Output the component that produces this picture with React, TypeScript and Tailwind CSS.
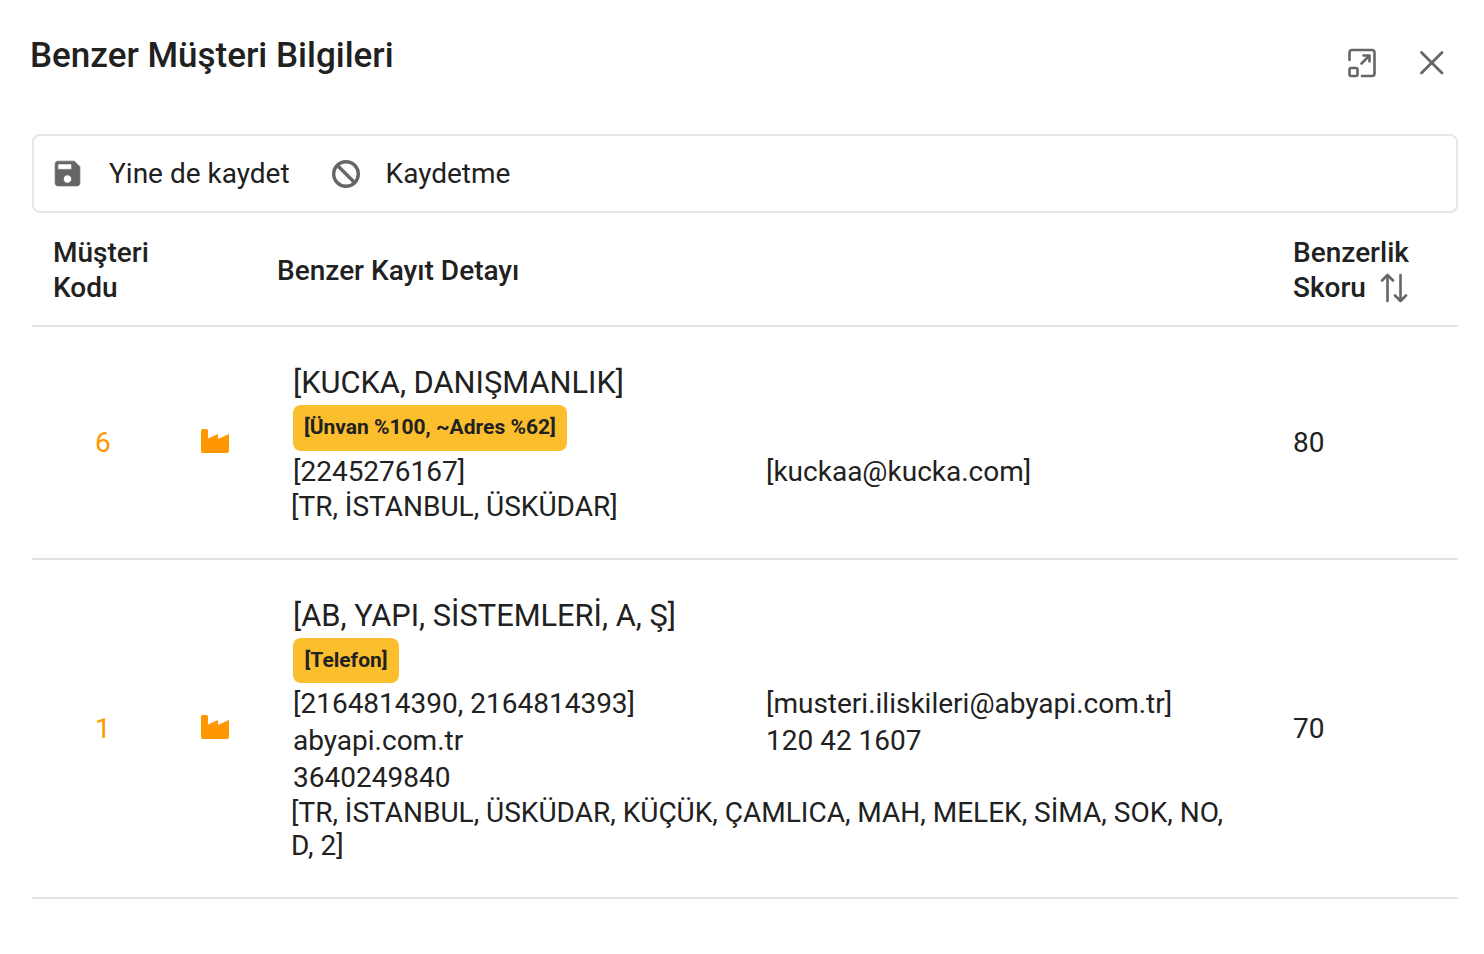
import React from "react";

const Factory = () => (
  <svg width="28" height="24" viewBox="0 0 28 24" className="mb-[4px] block text-[#ff9800]" fill="currentColor">
    <path d="M1.5 0h4A1.5 1.5 0 0 1 7 1.5V9.5L17 5v5l11-5v17a2 2 0 0 1-2 2H2a2 2 0 0 1-2-2V1.5A1.5 1.5 0 0 1 1.5 0z" />
  </svg>
);

const Row = ({ code, children, score, className }: { code: string; children: React.ReactNode; score: string; className: string }) => (
  <div className={`grid grid-cols-[245px_1016px_1fr] items-center border-b-2 border-[#e3e3e3] ${className}`}>
    <div className="flex items-center pl-[63px]">
      <span className="w-[106px] text-[28px] text-[#ff9800]">{code}</span>
      <Factory />
    </div>
    <div>{children}</div>
    <div className="text-[28px] text-[#212121]">{score}</div>
  </div>
);

export default function App() {
  return (
    <div className="h-[954px] w-[1484px] bg-white pl-[32px] pr-[26px] font-['Roboto',sans-serif] text-[#212121]">
      <div className="flex h-[134px] items-start justify-between">
        <h1 className="ml-[-2px] mt-[35px] text-[35px] font-medium leading-[42px]">Benzer Müşteri Bilgileri</h1>
        <div className="mr-[11px] mt-[48px] flex items-center gap-[40px] text-[#666666]">
          <svg width="30" height="30" viewBox="0 0 30 30" fill="none" stroke="currentColor" strokeWidth="2.6" strokeLinecap="round" strokeLinejoin="round">
            <path d="M2.5 12V4.5a2.5 2.5 0 0 1 2.5-2.5h20a2.5 2.5 0 0 1 2.5 2.5v21a2.5 2.5 0 0 1-2.5 2.5H15" />
            <rect x="2.5" y="20" width="8" height="8" rx="1.5" />
            <path d="M14.5 15.5 L22 8 M16.5 7.5h6v6" />
          </svg>
          <svg width="30" height="30" viewBox="0 0 30 30" fill="none" stroke="currentColor" strokeWidth="2.8" strokeLinecap="round">
            <path d="M4.5 4.5 25 25M25 4.5 4.5 25" />
          </svg>
        </div>
      </div>

      <div className="flex h-[79px] items-center rounded-[8px] border-2 border-[#e6e6e6] pl-[17px]">
        <svg width="33" height="33" viewBox="0 0 24 24" fill="#666666" stroke="#666666" strokeWidth="0.5" strokeLinejoin="round" className="shrink-0">
          <path d="M17 3H5c-1.11 0-2 .9-2 2v14c0 1.1.89 2 2 2h14c1.1 0 2-.9 2-2V7l-4-4zm-5 16c-1.66 0-3-1.34-3-3s1.34-3 3-3 3 1.34 3 3-1.34 3-3 3zm3-10H5V5h10v4z" />
        </svg>
        <span className="ml-[25px] text-[28px]">Yine de kaydet</span>
        <svg width="30" height="30" viewBox="0 0 30 30" fill="none" stroke="#666666" strokeWidth="3.4" className="ml-[41px] shrink-0">
          <circle cx="15" cy="15" r="12.3" />
          <path d="M6.5 6.5 23.5 23.5" />
        </svg>
        <span className="ml-[25px] text-[28px]">Kaydetme</span>
      </div>

      <div className="grid h-[114px] grid-cols-[245px_1016px_1fr] items-center border-b-2 border-[#e3e3e3] pt-[2px] text-[28px] font-medium leading-[35px]">
        <div className="pl-[21px]">Müşteri<br />Kodu</div>
        <div>Benzer Kayıt Detayı</div>
        <div className="flex flex-col">
          <span>Benzerlik</span>
          <span className="flex items-center">
            Skoru
            <svg width="30" height="32" viewBox="0 0 30 32" fill="none" stroke="#666666" strokeWidth="2.6" strokeLinecap="round" strokeLinejoin="round" className="ml-[13px]">
              <path d="M8.5 29V3M3 8.5 8.5 3 14 8.5" />
              <path d="M21.5 3v26M16 23.5l5.5 5.5 5.5-5.5" />
            </svg>
          </span>
        </div>
      </div>

      <Row code="6" score="80" className="h-[233px]">
        <div className="pl-[16px] text-[28px] leading-[37px]">
          <div className="mb-[2px] pt-[1px] text-[30.8px] leading-[40px]">[KUCKA, DANIŞMANLIK]</div>
          <div className="mb-[2px] h-[46px] w-fit rounded-[8px] bg-[#fbbf2d] px-[11px] text-[21px] font-bold leading-[44px]">[Ünvan %100, ~Adres %62]</div>
          <div className="grid grid-cols-[473px_1fr]">
            <span>[2245276167]</span>
            <span>[kuckaa@kucka.com]</span>
          </div>
          <div className="ml-[-2px] leading-[33px]">[TR, İSTANBUL, ÜSKÜDAR]</div>
        </div>
      </Row>

      <Row code="1" score="70" className="h-[339px]">
        <div className="pl-[16px] text-[28px] leading-[37px]">
          <div className="mb-[2px] text-[30.8px] leading-[40px]">[AB, YAPI, SİSTEMLERİ, A, Ş]</div>
          <div className="mb-[2px] h-[45px] w-fit rounded-[8px] bg-[#fbbf2d] px-[11.5px] text-[21px] font-bold leading-[44px]">[Telefon]</div>
          <div className="grid grid-cols-[473px_1fr]">
            <span>[2164814390, 2164814393]</span>
            <span>[musteri.iliskileri@abyapi.com.tr]</span>
            <span>abyapi.com.tr</span>
            <span>120 42 1607</span>
            <span>3640249840</span>
          </div>
          <div className="ml-[-2px] w-[950px] leading-[33px]">[TR, İSTANBUL, ÜSKÜDAR, KÜÇÜK, ÇAMLICA, MAH, MELEK, SİMA, SOK, NO, D, 2]</div>
        </div>
      </Row>
    </div>
  );
}
